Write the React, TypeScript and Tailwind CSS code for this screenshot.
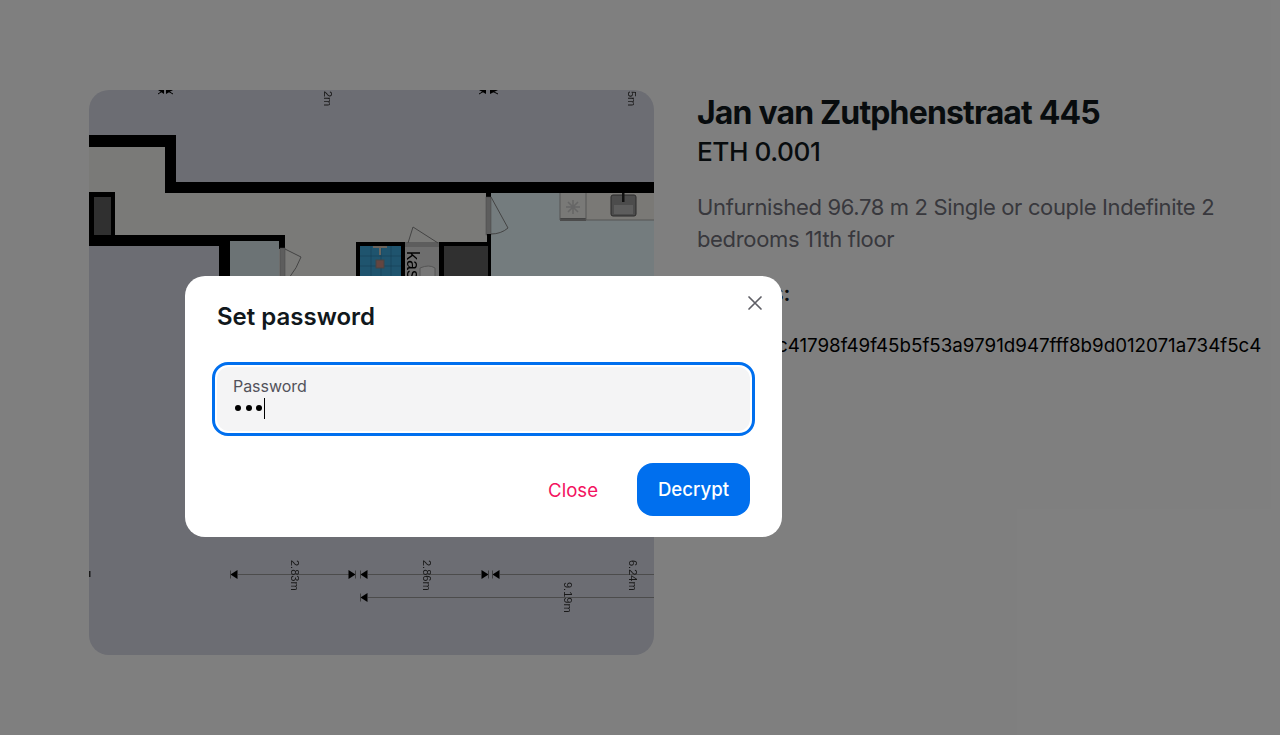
import React from "react";

function Marker({ x, y, dir = 1 }: { x: number; y: number; dir?: number }) {
  return (
    <g transform={`translate(${x} ${y}) scale(${dir} 1)`}>
      <path d="M-3.5 -4.5 L3.5 0 L-3.5 4.5 Z" fill="#000" />
      <rect x={3} y={-4} width={0.8} height={8} fill="#666" />
    </g>
  );
}

function DimText({ x, y, t }: { x: number; y: number; t: string }) {
  return (
    <text transform={`translate(${x} ${y}) rotate(90)`} fontSize="11" fill="#333" fontFamily="Liberation Sans, sans-serif">
      {t}
    </text>
  );
}

function FloorPlan() {
  return (
    <svg viewBox="0 0 565 565" className="block w-full h-full blur-[0.6px]">
      <rect width="565" height="565" fill="#d8dae6" />
      {/* corridor floor */}
      <path d="M0 50 H80 V98 H402 V300 H141 V150 H0 Z" fill="#f4f4f0" />
      {/* kitchen */}
      <rect x="402" y="100" width="163" height="200" fill="#e8f8fc" />
      <rect x="471" y="102" width="94" height="28" fill="#f4f2ec" />
      <rect x="471" y="102" width="26" height="26" fill="#f2f2ee" />
      <rect x="471" y="128" width="26" height="3" fill="#888" />
      <path d="M471 102 V130 H565" stroke="#aaa" fill="none" />
      <path d="M497 102 V130" stroke="#aaa" />
      <g stroke="#ccc" strokeWidth="1.6">
        <path d="M484 110 V124 M477 117 H491 M479 112 L489 122 M489 112 L479 122" />
      </g>
      <rect x="522" y="105" width="25" height="21" rx="2" fill="#999" stroke="#555" />
      <rect x="525" y="115" width="19" height="9" fill="#bbb" />
      <rect x="533" y="100" width="2.5" height="12" fill="#222" />

      {/* walls */}
      <rect x="0" y="45" width="87" height="12" fill="#000" />
      <rect x="76" y="45" width="11" height="58" fill="#000" />
      <rect x="76" y="92" width="489" height="11" fill="#000" />
      <rect x="0" y="102" width="26" height="46" fill="#000" />
      <rect x="5" y="107" width="17" height="38" fill="#606060" />
      <rect x="0" y="145" width="196" height="11" fill="#000" />
      <rect x="130" y="145" width="11" height="60" fill="#000" />
      <rect x="190" y="145" width="6" height="14" fill="#000" />
      <rect x="141" y="151" width="49" height="60" fill="#d9e6ea" />
      <rect x="191" y="158" width="5" height="50" fill="#bbb" stroke="#888" strokeWidth="0.5" />
      <path d="M196 159 L212 167 Q208 178 200 188" fill="none" stroke="#888" />

      {/* bathroom */}
      <rect x="267" y="152" width="49" height="60" fill="#000" />
      <rect x="271" y="156" width="41" height="60" fill="#3fa8dc" />
      <g stroke="#2a7ca8" strokeWidth="0.6">
        <path d="M271 166 H312 M271 176 H312 M282 156 V186 M292 156 V186 M302 156 V186" />
      </g>
      <rect x="287" y="170" width="8" height="8" fill="#c98a80" stroke="#888" />
      <path d="M284 157 H298 M291 157 V165" stroke="#d5c9bb" strokeWidth="2" />

      {/* kast */}
      <rect x="316" y="152" width="34" height="60" fill="#dcdcdc" />
      <rect x="316" y="152" width="34" height="5" fill="#bbb" />
      <path d="M319 153 L324 137 L349 153" fill="none" stroke="#888" />
      <path d="M331 186 V178 Q340 174 346 178 V186" fill="#eee" stroke="#aaa" />
      <text transform="translate(318 161) rotate(90)" fontSize="18" fill="#000" fontFamily="Liberation Sans, sans-serif">kas</text>

      {/* dark store */}
      <rect x="350" y="152" width="52" height="60" fill="#000" />
      <rect x="355" y="156" width="44" height="60" fill="#606060" />
      <rect x="397" y="98" width="5" height="10" fill="#000" />
      <rect x="397" y="107" width="5" height="38" fill="#bbb" stroke="#888" strokeWidth="0.5" />
      <rect x="398" y="144" width="4" height="10" fill="#000" />
      <path d="M402 107 L419 138 Q412 144 402 144" fill="none" stroke="#888" />

      {/* top dimension */}
      <path d="M69 0 H75 L75 4 Z M84 0 H77 L77 4 Z" fill="#000" />
      <path d="M69 4 L75 0 M84 4 L77 0" stroke="#000" strokeWidth="1" />
      <path d="M390 0 H397 V4 Z M409 0 H401 V4 Z" fill="#000" />
      <path d="M390 4 L397 0 M409 4 L401 0" stroke="#000" strokeWidth="1" />
      <DimText x={235} y={1} t="2m" />
      <DimText x={539} y={1} t="5m" />

      {/* bottom dimension */}
      <rect x="0" y="481" width="1.5" height="6" fill="#333" />
      <path d="M149 484.5 H260 M279 484.5 H392 M411 484.5 H565 M279 507.5 H565" stroke="#999" strokeWidth="1" />
      <Marker x={145} y={484.5} dir={-1} />
      <Marker x={263} y={484.5} dir={1} />
      <Marker x={275} y={484.5} dir={-1} />
      <Marker x={396} y={484.5} dir={1} />
      <Marker x={407} y={484.5} dir={-1} />
      <Marker x={275} y={507.5} dir={-1} />
      <DimText x={202} y={470} t="2.83m" />
      <DimText x={334} y={470} t="2.86m" />
      <DimText x={540} y={470} t="6.24m" />
      <DimText x={475} y={492} t="9.19m" />
    </svg>
  );
}

export default function App() {
  return (
    <div className="relative h-[735px] w-[1280px] overflow-hidden bg-white font-['Inter',sans-serif]">
      <div className="flex gap-[43px] pl-[89px] pr-[19px] pt-[90px]">
        <div className="h-[565px] w-[565px] shrink-0 overflow-hidden rounded-[20px]">
          <FloorPlan />
        </div>
        <div className="min-w-0 flex-1 overflow-hidden pt-[3px]">
          <h1 className="text-[32px] font-bold leading-[40px] tracking-[-0.85px] text-[#11181c]">Jan van Zutphenstraat 445</h1>
          <p className="text-[26.2px] font-medium leading-[38px] tracking-[-0.45px] text-[#11181c]">ETH 0.001</p>
          <p className="mt-[20px] text-[22px] leading-[32px] tracking-[-0.35px] text-[#71717a]">
            Unfurnished 96.78 m 2 Single or couple Indefinite 2 bedrooms 11th floor
          </p>
          <p className="mt-[24px] text-[21.5px] font-semibold leading-[28px] text-[#11181c]">Address:</p>
          <p className="mt-[25px] whitespace-nowrap text-[18.75px] leading-[28px] text-black">0x7a3df1c41798f49f45b5f53a9791d947fff8b9d012071a734f5c4e0b6d</p>
        </div>
      </div>

      <div className="absolute inset-0 bg-black/50" />

      <div className="absolute left-[185px] top-[276px] flex h-[261px] w-[597px] flex-col rounded-[20px] bg-white px-[32px] pt-[25px]">
        <button className="absolute right-[17px] top-[17px] text-[#5f5f66]" aria-label="Close">
          <svg width="20" height="20" viewBox="0 0 20 20" fill="none" stroke="currentColor" strokeWidth="1.7" strokeLinecap="round">
            <path d="M4 4 L16 16 M16 4 L4 16" />
          </svg>
        </button>
        <h2 className="text-[24px] font-semibold leading-[32px] text-[#11181c]">Set password</h2>
        <div className="-mx-[5px] mt-[29px] h-[74px] rounded-[16px] border-[3px] border-[#006fee] bg-white p-[2px]">
          <div className="h-full rounded-[12px] bg-[#f4f4f5] pl-[16px] pt-[9px]">
            <div className="text-[16px] leading-[20px] tracking-[-0.05px] text-[#52525b]">Password</div>
            <div className="mt-[1px] flex h-[22px] items-center text-black">
              <span className="ml-[2px] flex gap-[4.5px]">
                <span className="h-[6px] w-[6px] rounded-full bg-black" />
                <span className="h-[6px] w-[6px] rounded-full bg-black" />
                <span className="h-[6px] w-[6px] rounded-full bg-black" />
              </span>
              <span className="ml-[1.5px] h-[21px] w-[1.5px] bg-black" />
            </div>
          </div>
        </div>
        <div className="mt-[27px] flex items-center justify-end gap-[39px]">
          <span className="text-[18.6px] leading-[28px] text-[#f31260]">Close</span>
          <button className="h-[53px] w-[113px] rounded-[16px] bg-[#006fee] text-[18.6px] font-medium text-white">Decrypt</button>
        </div>
      </div>
    </div>
  );
}
